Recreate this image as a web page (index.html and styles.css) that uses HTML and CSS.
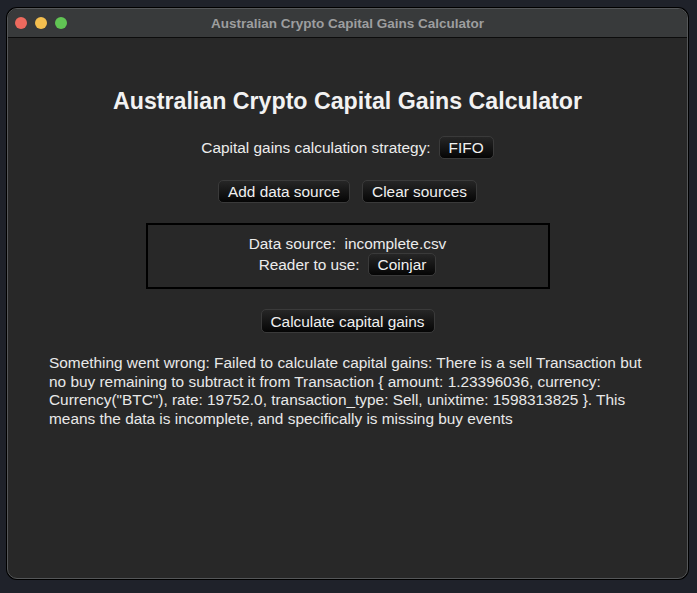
FILE: index.html
```html
<!DOCTYPE html>
<html>
<head>
<meta charset="utf-8">
<title>Australian Crypto Capital Gains Calculator</title>
<link rel="stylesheet" href="styles.css">
</head>
<body>
<div class="window">
  <div class="titlebar">
    <div class="lights">
      <span class="light red"></span>
      <span class="light yellow"></span>
      <span class="light green"></span>
    </div>
    <div class="wintitle">Australian Crypto Capital Gains Calculator</div>
  </div>
  <div class="content">
    <h1 class="heading">Australian Crypto Capital Gains Calculator</h1>
    <div class="row strategy">
      <span class="label">Capital gains calculation strategy:</span>
      <button class="btn">FIFO</button>
    </div>
    <div class="row sources">
      <button class="btn">Add data source</button>
      <button class="btn">Clear sources</button>
    </div>
    <div class="sourcebox">
      <div class="line">Data source:&nbsp; incomplete.csv</div>
      <div class="line reader">
        <span class="label">Reader to use:</span>
        <button class="btn">Coinjar</button>
      </div>
    </div>
    <div class="row calc">
      <button class="btn tall">Calculate capital gains</button>
    </div>
    <p class="error">Something went wrong: Failed to calculate capital gains: There is a sell Transaction but no buy remaining to subtract it from Transaction { amount: 1.23396036, currency: Currency("BTC"), rate: 19752.0, transaction_type: Sell, unixtime: 1598313825 }. This means the data is incomplete, and specifically is missing buy events</p>
  </div>
</div>
</body>
</html>
```
FILE: styles.css
```css
html, body {
  margin: 0;
  padding: 0;
  background: #1f222a;
  width: 697px;
  height: 593px;
  overflow: hidden;
  font-family: "Liberation Sans", Arial, sans-serif;
}
.window {
  margin: 8px 0 0 7px;
  width: 681px;
  height: 571px;
  box-sizing: border-box;
  border: 1px solid #555759;
  border-radius: 10px;
  overflow: hidden;
  background: #282828;
  display: flex;
  flex-direction: column;
  box-shadow: 0 0 0 1px #000;
}
.titlebar {
  position: relative;
  height: 28px;
  flex: none;
  background: #383a3b;
  border-bottom: 1px solid #0c0c0c;
  display: flex;
  align-items: center;
  justify-content: center;
}
.lights {
  position: absolute;
  left: 7px;
  top: 8px;
  display: flex;
  gap: 8px;
}
.light {
  width: 12px;
  height: 12px;
  border-radius: 50%;
  display: block;
}
.red { background: #ed6a5e; }
.yellow { background: #f4bf4f; }
.green { background: #61c554; }
.wintitle {
  color: #9d9e9f;
  font-weight: bold;
  font-size: 13.5px;
}
.content {
  flex: 1;
  display: flex;
  flex-direction: column;
  align-items: center;
  color: #ececec;
  font-size: 15.4px;
}
.heading {
  margin: 49px 0 0 0;
  font-size: 23.2px;
  line-height: 28px;
  font-weight: bold;
  color: #f2f2f2;
}
.row {
  display: flex;
  align-items: center;
  justify-content: center;
}
.strategy {
  margin-top: 21px;
  gap: 8px;
}
.sources {
  margin-top: 21px;
  gap: 12px;
}
.btn {
  font-family: "Liberation Sans", Arial, sans-serif;
  font-size: 15.4px;
  color: #f0f0f0;
  height: 23px;
  padding: 0 9px;
  border: 1px solid #3a3a3a;
  border-radius: 5px;
  background: linear-gradient(#262626, #050505);
  line-height: 21px;
}
.btn.tall {
  height: 24px;
}
.sourcebox {
  margin-top: 20px;
  width: 404px;
  height: 66px;
  box-sizing: border-box;
  border: 2px solid #000;
  display: flex;
  flex-direction: column;
  align-items: center;
  padding-top: 10px;
}
.line {
  line-height: 18px;
}
.reader {
  display: flex;
  align-items: center;
  gap: 8px;
}
.calc {
  margin-top: 20px;
}
.error {
  margin: 21px 0 0 0;
  align-self: stretch;
  padding: 0 41px 0 41px;
  line-height: 18.5px;
  color: #e8e8e8;
}
```
